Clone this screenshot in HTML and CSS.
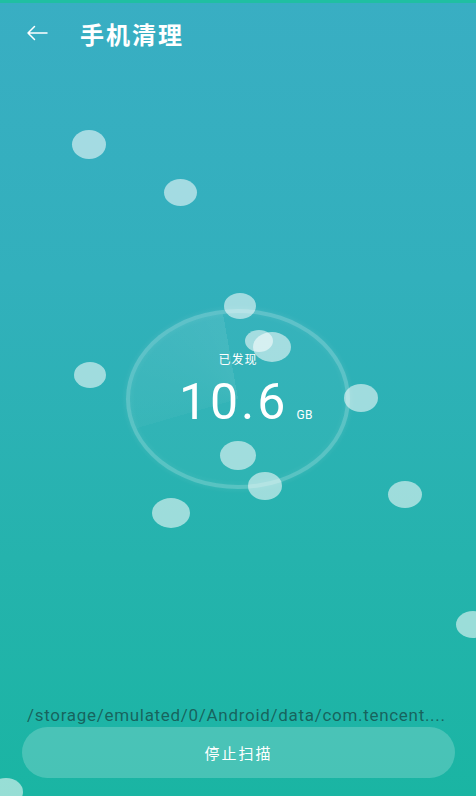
FILE: index.html
```html
<!DOCTYPE html>
<html lang="zh-CN">
<head>
<meta charset="utf-8">
<title>手机清理</title>
<link rel="stylesheet" href="styles.css">
</head>
<body>
<div class="screen">
  <div class="topline"></div>
  <header class="bar">
    <svg class="back" width="22" height="16" viewBox="0 0 22 16" aria-hidden="true">
      <path d="M21 8H2M8.5 1.5L2 8l6.5 6.5" fill="none" stroke="#fff" stroke-width="1.5" stroke-linecap="round" stroke-linejoin="round"/>
    </svg>
    <h1 class="title">手机清理</h1>
  </header>

  <main class="stage">
    <div class="ring">
      <div class="sweep"></div>
      <div class="readout">
        <div class="label">已发现</div>
        <div class="amount"><span class="num">10.6</span><span class="unit">GB</span></div>
      </div>
    </div>
  </main>

  <div class="path">/storage/emulated/0/Android/data/com.tencent....</div>
  <button class="stop">停止扫描</button>

  <div class="bubble b1"></div>
  <div class="bubble b2"></div>
  <div class="bubble b3"></div>
  <div class="bubble b4"></div>
  <div class="bubble b5"></div>
  <div class="bubble b6"></div>
  <div class="bubble b7"></div>
  <div class="bubble b8"></div>
  <div class="bubble b9"></div>
  <div class="bubble b10"></div>
  <div class="bubble b11"></div>
  <div class="bubble b12"></div>
  <div class="bubble b13"></div>
</div>
</body>
</html>
```

FILE: styles.css
```css
html, body {
  margin: 0;
  padding: 0;
}
body {
  width: 476px;
  height: 796px;
  overflow: hidden;
  font-family: Roboto, "Noto Sans CJK SC", sans-serif;
}
.screen {
  position: relative;
  width: 476px;
  height: 796px;
  display: flex;
  flex-direction: column;
  overflow: hidden;
  background: linear-gradient(180deg, #39aec3 0%, #32b0bc 35%, #25b3ad 70%, #1ab5a3 100%);
}
.topline {
  height: 3px;
  background: #20bfa2;
  flex: none;
}
.bar {
  height: 60px;
  flex: none;
  display: flex;
  align-items: center;
  padding-left: 26px;
}
.back {
  display: block;
  margin-right: 32px;
}
.title {
  margin: 0;
  color: #fff;
  font-family: "Noto Sans CJK SC", sans-serif;
  font-size: 24px;
  font-weight: 700;
  letter-spacing: 2px;
}
.stage {
  flex: 1;
  display: flex;
  justify-content: center;
  align-items: flex-start;
  padding-top: 246px;
}
.ring {
  position: relative;
  width: 216px;
  height: 172px;
  border-radius: 50%;
  border: 4px solid rgba(255, 255, 255, 0.2);
  box-shadow: 0 0 6px rgba(255, 255, 255, 0.1), inset 0 0 6px rgba(255, 255, 255, 0.08);
  background: rgba(255, 255, 255, 0.03);
  display: flex;
  justify-content: center;
  align-items: center;
}
.sweep {
  position: absolute;
  inset: 0;
  border-radius: 50%;
  background: conic-gradient(from 0deg, transparent 0deg 254deg, rgba(255, 255, 255, 0.03) 254deg, rgba(255, 255, 255, 0.08) 350deg, transparent 350deg);
}
.readout {
  position: relative;
  display: flex;
  flex-direction: column;
  align-items: center;
  color: #fff;
  margin-top: -20px;
}
.label {
  font-family: "Noto Sans CJK SC", sans-serif;
  font-size: 12px;
  line-height: 16px;
  letter-spacing: 1px;
}
.amount {
  display: flex;
  align-items: baseline;
  margin-top: 10px;
  padding-left: 16px;
}
.num {
  font-size: 50px;
  line-height: 50px;
  letter-spacing: 3px;
  font-weight: 400;
}
.unit {
  font-size: 12px;
  margin-left: 8px;
  letter-spacing: 0.5px;
}
.path {
  flex: none;
  padding-left: 27px;
  color: rgba(22, 84, 80, 0.85);
  font-size: 17px;
  line-height: 20px;
  letter-spacing: 0.7px;
  white-space: nowrap;
}
.stop {
  flex: none;
  margin: 2px 21px 18px 22px;
  height: 51px;
  border: none;
  border-radius: 26px;
  background: rgba(255, 255, 255, 0.2);
  color: #fff;
  font-family: "Noto Sans CJK SC", sans-serif;
  font-size: 15px;
  letter-spacing: 2px;
}
.bubble {
  position: absolute;
  width: 34px;
  height: 28px;
  border-radius: 50%;
  background: rgba(255, 255, 255, 0.55);
}
.b1 { left: 72px; top: 130px; height: 29px; }
.b2 { left: 164px; top: 179px; width: 33px; height: 27px; }
.b3 { left: 224px; top: 293px; width: 32px; height: 26px; }
.b4 { left: 245px; top: 330px; width: 28px; height: 22px; }
.b5 { left: 253px; top: 332px; width: 38px; height: 30px; }
.b6 { left: 74px; top: 362px; width: 32px; height: 26px; }
.b7 { left: 344px; top: 384px; }
.b8 { left: 220px; top: 441px; width: 36px; height: 29px; }
.b9 { left: 248px; top: 472px; }
.b10 { left: 152px; top: 498px; width: 38px; height: 30px; }
.b11 { left: 388px; top: 481px; height: 27px; }
.b12 { left: 456px; top: 611px; height: 27px; }
.b13 { left: -11px; top: 778px; }
```
